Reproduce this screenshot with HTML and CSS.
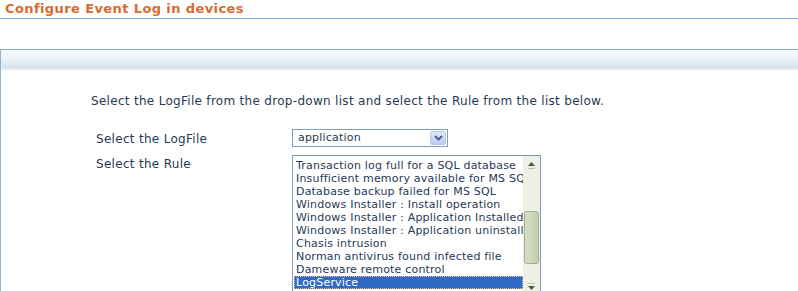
FILE: index.html
```html
<!DOCTYPE html>
<html lang="en">
<head>
    <meta charset="UTF-8">
    <title>Configure Event Log in devices</title>
    <link rel="stylesheet" href="styles.css">
</head>
<body>
    <h1 class="page-title">Configure Event Log in devices</h1>

    <div class="panel">
        <div class="panel-header"></div>
        <div class="panel-body">
            <p class="intro">Select the LogFile from the drop-down list and select the Rule from the list below.</p>

            <div class="form-row">
                <div class="form-label">Select the LogFile</div>
                <div class="dropdown">
                    <span class="dropdown-value">application</span>
                    <span class="dropdown-btn">
                        <svg width="9" height="6" viewBox="0 0 9 6">
                            <path d="M1 1 L4.5 4.5 L8 1" fill="none" stroke="#4d6185" stroke-width="2"/>
                        </svg>
                    </span>
                </div>
            </div>

            <div class="form-row">
                <div class="form-label">Select the Rule</div>
                <div class="listbox">
                    <ul class="listbox-items">
                        <li>Transaction log full for a SQL database</li>
                        <li>Insufficient memory available for MS SQL</li>
                        <li>Database backup failed for MS SQL</li>
                        <li>Windows Installer : Install operation</li>
                        <li>Windows Installer : Application Installed</li>
                        <li>Windows Installer : Application uninstall</li>
                        <li>Chasis intrusion</li>
                        <li>Norman antivirus found infected file</li>
                        <li>Dameware remote control</li>
                        <li class="selected">LogService</li>
                    </ul>
                    <div class="scrollbar">
                        <div class="scroll-arrow">
                            <svg width="9" height="8" viewBox="0 0 9 8">
                                <path d="M4.5 1 L8 5 L1 5 Z" fill="#4a5a3e"/>
                                <rect x="1" y="7" width="7" height="1" fill="#b9c2a8"/>
                            </svg>
                        </div>
                        <div class="scroll-track">
                            <div class="scroll-thumb"></div>
                        </div>
                        <div class="scroll-arrow">
                            <svg width="9" height="8" viewBox="0 0 9 8">
                                <rect x="1" y="0" width="7" height="1" fill="#b9c2a8"/>
                                <path d="M1 3 L8 3 L4.5 7 Z" fill="#4a5a3e"/>
                            </svg>
                        </div>
                    </div>
                </div>
            </div>
        </div>
    </div>
</body>
</html>
```

FILE: styles.css
```css
* {
    margin: 0;
    padding: 0;
    box-sizing: border-box;
}

body {
    font-family: 'DejaVu Sans', Verdana, sans-serif;
    background-color: #ffffff;
    color: #1f3a55;
    overflow: hidden;
}

.page-title {
    font-size: 13px;
    font-weight: bold;
    letter-spacing: 0.4px;
    color: #dd6a2e;
    line-height: 16px;
    padding: 1px 0 1px 5px;
    border-bottom: 1px solid #7fa8d4;
}

.panel {
    margin-top: 30px;
    border-top: 1px solid #8db4d2;
    border-left: 1px solid #8db4d2;
}

.panel-header {
    height: 20px;
    background: linear-gradient(to bottom, #f5f9fd 0%, #eef4fa 40%, #d6e3ec 100%);
    border-bottom: 2px solid #e6e8ea;
}

.panel-body {
    padding: 24px 0 0 90px;
}

.intro {
    font-size: 12px;
    letter-spacing: 0.3px;
    line-height: 14px;
}

.form-row {
    display: flex;
    align-items: flex-start;
}

.form-label {
    width: 201px;
    padding-left: 5px;
    font-size: 12px;
    letter-spacing: 0.3px;
    line-height: 14px;
}

.form-row:nth-of-type(1) {
    margin-top: 21px;
}

.form-row:nth-of-type(1) .form-label {
    padding-top: 3px;
}

.form-row:nth-of-type(2) {
    margin-top: 8px;
}

.form-row:nth-of-type(2) .form-label {
    padding-top: 2px;
}

.dropdown {
    width: 156px;
    height: 18px;
    border: 1px solid #7f9db9;
    display: flex;
    align-items: center;
    justify-content: space-between;
    padding: 0 1px 0 5px;
}

.dropdown-value {
    font-size: 11px;
    letter-spacing: 0.2px;
    line-height: 14px;
}

.dropdown-btn {
    width: 16px;
    height: 14px;
    border-radius: 2px;
    background: linear-gradient(to bottom, #dde8fa, #b8cdf2);
    border: 1px solid #b7c9ea;
    display: flex;
    align-items: center;
    justify-content: center;
}

.listbox {
    width: 249px;
    height: 140px;
    border: 1px solid #7f9db9;
    border-bottom: none;
    display: flex;
    overflow: hidden;
}

.listbox-items {
    list-style: none;
    flex: 1;
    overflow: hidden;
    padding-top: 3px;
    padding-left: 1px;
}

.listbox-items li {
    font-size: 11px;
    letter-spacing: 0.2px;
    line-height: 13px;
    height: 13px;
    padding-left: 2px;
    white-space: nowrap;
    overflow: hidden;
}

.listbox-items li.selected {
    background-color: #316ac5;
    color: #ffffff;
    outline: 1px dotted #f0c080;
    outline-offset: -1px;
}

.scrollbar {
    width: 17px;
    display: flex;
    flex-direction: column;
    background-color: #eef0e4;
}

.scroll-arrow {
    height: 17px;
    display: flex;
    align-items: center;
    justify-content: center;
}

.scroll-track {
    flex: 1;
    padding-top: 38px;
    padding-left: 1px;
}

.scroll-thumb {
    width: 15px;
    height: 53px;
    border: 1px solid #a3ad90;
    border-radius: 3px;
    background: linear-gradient(to right, #d7dec6, #c6cfb1);
}
```
